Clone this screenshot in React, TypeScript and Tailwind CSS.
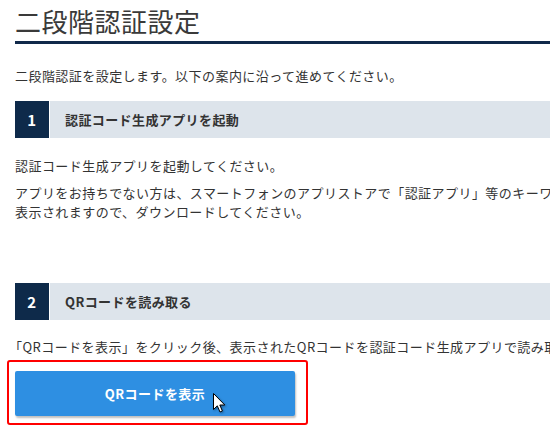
import React from 'react';

const font = { fontFamily: '"Noto Sans CJK JP", "Noto Sans", sans-serif' };

type StepProps = {
  num: number;
  title: string;
};

const StepHeader = ({ num, title }: StepProps): React.ReactElement => (
  <div className="flex h-[37px] w-full">
    <div className="flex w-[34px] items-center justify-center bg-[#0e2a4a] text-[15px] font-bold text-white">
      {num}
    </div>
    <div className="ml-px flex flex-1 items-center bg-[#dde4eb] pl-[15px] text-[13px] font-bold tracking-[0.4px] text-[#333]">
      {title}
    </div>
  </div>
);

const Cursor = (): React.ReactElement => (
  <svg
    className="absolute left-[198px] top-[22px] drop-shadow-[1px_1px_1px_rgba(0,0,0,0.35)]"
    width="13"
    height="20"
    viewBox="0 0 13 20"
  >
    <path
      d="M0.5 0.5 L0.5 16.5 L4.3 12.8 L7 19 L9.4 18 L6.8 12 L11.8 12 Z"
      fill="#fff"
      stroke="#000"
      strokeWidth="1"
      strokeLinejoin="round"
    />
  </svg>
);

const App = (): React.ReactElement => {
  return (
    <div className="h-[439px] w-[550px] overflow-hidden bg-white" style={font}>
      <div className="w-[760px] pl-[15px] pt-[6px] text-[13px] leading-[19px] tracking-[0.45px] text-[#333]">
        <h1 className="border-b-[3px] border-[#10294a] pb-[5px] text-[26px] leading-[30px] tracking-[0.5px] text-[#3a3a3a]">
          二段階認証設定
        </h1>
        <p className="mt-[22px] leading-[20px]">
          二段階認証を設定します。以下の案内に沿って進めてください。
        </p>

        <div className="mt-[15px]">
          <StepHeader num={1} title="認証コード生成アプリを起動" />
        </div>
        <p className="mt-[18px]">認証コード生成アプリを起動してください。</p>
        <p className="mt-[8px] whitespace-nowrap">
          アプリをお持ちでない方は、スマートフォンのアプリストアで「認証アプリ」等のキーワードで検索すると、認証コード生成アプリが
          <br />
          表示されますので、ダウンロードしてください。
        </p>

        <div className="mt-[62px]">
          <StepHeader num={2} title="QRコードを読み取る" />
        </div>
        <p className="-ml-[6px] mt-[17px] whitespace-nowrap">
          「QRコードを表示」をクリック後、表示されたQRコードを認証コード生成アプリで読み取ってください。
        </p>

        <div className="relative mt-[15px] w-[280px]">
          <div className="pointer-events-none absolute -bottom-[9px] -left-[8px] -right-[13px] -top-[11px] rounded-[3px] border-2 border-[#ff0000]" />
          <button
            type="button"
            className="h-[45px] w-[280px] rounded-[2px] bg-[#2e8fe2] text-[13px] font-bold text-white shadow-[1px_2px_2px_rgba(0,0,0,0.25)]"
          >
            QRコードを表示
          </button>
          <Cursor />
        </div>
      </div>
    </div>
  );
};

export default App;
